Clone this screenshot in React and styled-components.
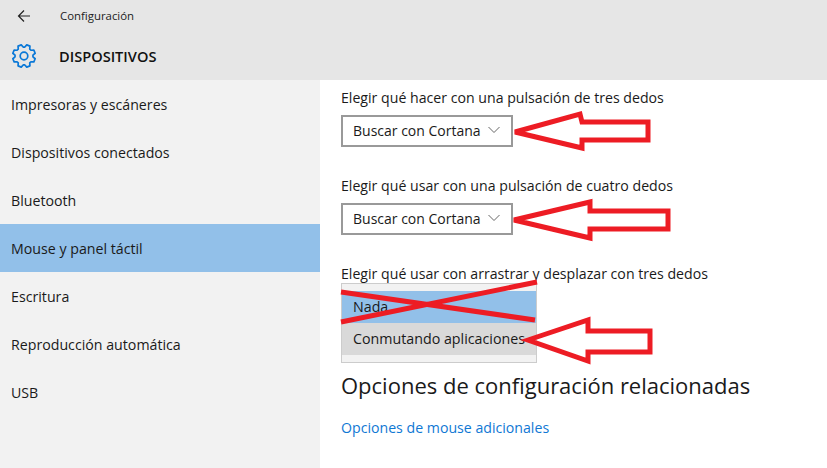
import React from "react";
import styled, { createGlobalStyle } from "styled-components";

const Global = createGlobalStyle`
  html, body { margin: 0; padding: 0; background: #fff; }
  body { font-family: "Open Sans", "Noto Sans", "Liberation Sans", sans-serif; color: #1a1a1a; }
`;
const Page = styled.div`
  position: relative; width: 827px; height: 468px; overflow: hidden;
  display: flex; flex-direction: column; background: #fff;
`;
const Header = styled.header`
  height: 80px; flex: none; background: #e6e6e6; box-sizing: border-box;
`;
const TopBar = styled.div`
  height: 31px; display: flex; align-items: center; padding-left: 17px;
`;
const BackIcon = styled.svg`width: 14px; height: 14px; flex: none;`;
const AppTitle = styled.span`margin-left: 29px; font-size: 11.4px; color: #222;`;
const TitleRow = styled.div`
  height: 49px; display: flex; align-items: center; padding-left: 12px;
`;
const GearIcon = styled.svg`width: 24px; height: 24px; flex: none;`;
const PageTitle = styled.h1`
  margin: 0 0 0 23px; font-size: 14.6px; font-weight: 600; color: #111;
`;
const Body = styled.div`flex: 1; display: flex; min-height: 0;`;
const Side = styled.nav`width: 320px; flex: none; background: #f2f2f2;`;
const NavItem = styled.div`
  height: 48px; display: flex; align-items: center; padding-left: 11px;
  font-size: 14.2px; color: #1a1a1a;
  background: ${p => (p.$active ? "#92c0e9" : "transparent")};
`;
const Main = styled.main`flex: 1; padding: 8px 0 0 21px; box-sizing: border-box;`;
const Label = styled.div`font-size: 14.15px; line-height: 20px; color: #1a1a1a; white-space: nowrap;`;
const Select = styled.div`
  box-sizing: border-box; width: 172px; height: 32px; margin: 7px 0 29px;
  border: 2px solid #999; display: flex; align-items: center; justify-content: space-between;
  padding: 0 10px 2px; font-size: 14px; color: #1a1a1a; background: #fff;
`;
const Chevron = styled.svg`width: 12px; height: 8px; flex: none; margin-right: 1px;`;
const List = styled.div`
  box-sizing: border-box; width: 196px; height: 80px; margin-top: -1px;
  border: 1px solid #ccc; background: #f2f2f2; padding: 7px 0;
`;
const Option = styled.div`
  height: 32px; display: flex; align-items: center; padding: 0 0 2px 11px; box-sizing: border-box;
  font-size: 14.25px;
  background: ${p => (p.$tone === "sel" ? "#92c0e9" : "#d9d9d9")};
`;
const Heading = styled.h2`
  margin: 7px 0 0; font-size: 22px; line-height: 30px; font-weight: 400; color: #1a1a1a; white-space: nowrap;
`;
const Link = styled.a`
  display: block; margin-top: 18px; font-size: 14.15px; line-height: 20px; color: #0f78d4;
`;
const Overlay = styled.svg`position: absolute; left: 0; top: 0; pointer-events: none;`;

const nav = ["Impresoras y escáneres", "Dispositivos conectados", "Bluetooth", "Mouse y panel táctil", "Escritura", "Reproducción automática", "USB"];
const arrows = [
  "515,132 580,114 582,122 648,122 648,140 582,140 582,148",
  "514,220 590,202 590,211 668,211 668,229 590,229 590,238",
  "528,340 588,320 588,331 650,331 650,352 588,352 588,361",
];

// Eight flat-ended teeth around the hub.
const gearPath = (() => {
  const pts = [];
  for (let i = 0; i < 8; i++) {
    const a = (i * Math.PI) / 4 + Math.PI / 8;
    [[9, -0.3], [11.5, -0.15], [11.5, 0.15], [9, 0.3]].forEach(([r, d]) =>
      pts.push(`${(12 + r * Math.cos(a + d)).toFixed(2)} ${(12 + r * Math.sin(a + d)).toFixed(2)}`)
    );
  }
  return `M${pts.join("L")}Z`;
})();

const Arrowhead = () => (
  <Chevron viewBox="0 0 12 8"><path d="M.5 1 6 6.5 11.5 1" fill="none" stroke="#666" strokeWidth="1" /></Chevron>
);

export default function App() {
  return (
    <Page>
      <Global />
      <Header>
        <TopBar>
          <BackIcon viewBox="0 0 14 14"><path d="M13 7H1.5M7 1.5 1.5 7 7 12.5" fill="none" stroke="#222" strokeWidth="1.2" /></BackIcon>
          <AppTitle>Configuración</AppTitle>
        </TopBar>
        <TitleRow>
          <GearIcon viewBox="0 0 24 24">
            <path d={gearPath} fill="none" stroke="#0a78d7" strokeWidth="1.7" strokeLinejoin="round" />
            <circle cx="12" cy="12" r="3.8" fill="none" stroke="#0a78d7" strokeWidth="1.7" />
          </GearIcon>
          <PageTitle>DISPOSITIVOS</PageTitle>
        </TitleRow>
      </Header>
      <Body>
        <Side>
          {nav.map(n => <NavItem key={n} $active={n.startsWith("Mouse")}>{n}</NavItem>)}
        </Side>
        <Main>
          <Label>Elegir qué hacer con una pulsación de tres dedos</Label>
          <Select>Buscar con Cortana<Arrowhead /></Select>
          <Label>Elegir qué usar con una pulsación de cuatro dedos</Label>
          <Select>Buscar con Cortana<Arrowhead /></Select>
          <Label>Elegir qué usar con arrastrar y desplazar con tres dedos</Label>
          <List>
            <Option $tone="sel">Nada</Option>
            <Option>Conmutando aplicaciones</Option>
          </List>
          <Heading>Opciones de configuración relacionadas</Heading>
          <Link>Opciones de mouse adicionales</Link>
        </Main>
      </Body>
      <Overlay width="827" height="468" viewBox="0 0 827 468">
        {arrows.map(a => <polygon key={a} points={a} fill="none" stroke="#ed1c24" strokeWidth="5" />)}
        <path d="M341 292 535 320M341 322 537 282" stroke="#ed1c24" strokeWidth="5" fill="none" />
      </Overlay>
    </Page>
  );
}
